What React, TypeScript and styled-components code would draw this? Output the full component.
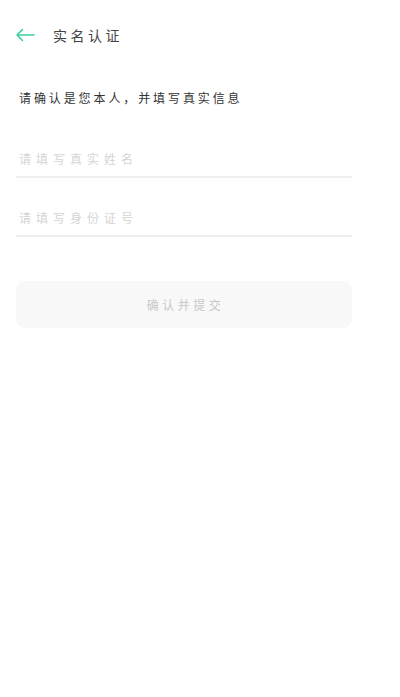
import styled, { createGlobalStyle } from 'styled-components'

const GlobalStyle = createGlobalStyle`
	html, body {
		margin: 0;
		padding: 0;
		background: #fff;
	}
	body {
		font-family: "Noto Sans CJK SC", "Noto Sans", sans-serif;
	}
`

export default function App() {
	return (
		<Page>
			<GlobalStyle />

			{/* Header */}
			<Header>
				<BackButton aria-label="back">
					<svg width="20" height="14" viewBox="0 0 20 14" fill="none">
						<path
							d="M19 7H2M7.5 1.5L2 7l5.5 5.5"
							stroke="#3fcf9f"
							strokeWidth="1.6"
							strokeLinecap="round"
							strokeLinejoin="round"
						/>
					</svg>
				</BackButton>
				<Title>实名认证</Title>
			</Header>

			<Body>
				<Hint>请确认是您本人，并填写真实信息</Hint>

				{/* Form */}
				<Form>
					<Field>
						<Input placeholder="请填写真实姓名" />
					</Field>
					<Field>
						<Input placeholder="请填写身份证号" />
					</Field>
				</Form>

				<SubmitButton disabled>确认并提交</SubmitButton>
			</Body>
		</Page>
	)
}

const Page = styled.div`
	width: 400px;
	min-height: 697px;
	background: #fff;
`

const Header = styled.div`
	display: flex;
	align-items: center;
	height: 40px;
	padding: 15px 0 0 15px;
	gap: 18px;
`

const BackButton = styled.button`
	display: flex;
	align-items: center;
	padding: 0;
	border: none;
	background: none;
	cursor: pointer;
`

const Title = styled.h1`
	margin: 0;
	font-size: 14px;
	font-weight: 400;
	letter-spacing: 3.5px;
	color: #444;
`

const Body = styled.div`
	width: 336px;
	padding: 33px 0 0 16px;
	display: flex;
	flex-direction: column;
`

const Hint = styled.p`
	margin: 0 0 0 3px;
	font-size: 12px;
	line-height: 20px;
	letter-spacing: 2.9px;
	color: #333;
`

const Form = styled.div`
	margin-top: 11px;
	display: flex;
	flex-direction: column;
`

const Field = styled.div`
	box-sizing: border-box;
	height: 59px;
	padding-top: 27px;
	display: flex;
	align-items: flex-start;
	border-bottom: 2px solid #efefef;
`

const Input = styled.input`
	flex: 1;
	height: 24px;
	margin: 0 0 0 3px;
	padding: 0;
	border: none;
	outline: none;
	background: transparent;
	font-family: inherit;
	font-size: 12px;
	letter-spacing: 5px;
	color: #333;

	&::placeholder {
		color: #d4d4d4;
	}
`

const SubmitButton = styled.button`
	margin-top: 44px;
	height: 47px;
	border: none;
	border-radius: 9px;
	background: #f8f8f8;
	font-family: inherit;
	font-size: 12px;
	letter-spacing: 3.5px;
	text-indent: 3px;
	color: #c8c8c8;
	cursor: default;
`
